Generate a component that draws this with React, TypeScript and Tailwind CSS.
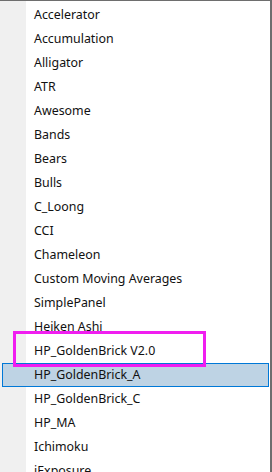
import React from 'react';

const items = [
  'Accelerator',
  'Accumulation',
  'Alligator',
  'ATR',
  'Awesome',
  'Bands',
  'Bears',
  'Bulls',
  'C_Loong',
  'CCI',
  'Chameleon',
  'Custom Moving Averages',
  'SimplePanel',
  'Heiken Ashi',
  'HP_GoldenBrick V2.0',
  'HP_GoldenBrick_A',
  'HP_GoldenBrick_C',
  'HP_MA',
  'Ichimoku',
  'iExposure',
];

export default function App() {
  const selected = 'HP_GoldenBrick_A';

  return (
    <div className="relative w-[272px] h-[472px] overflow-hidden bg-white font-['Noto_Sans','Liberation_Sans',sans-serif] text-[12.4px] text-[#111]">
      <div className="h-full border-t border-t-[#6e6e6e] border-r-2 border-r-[#6e6e6e] bg-[linear-gradient(to_right,#f0f0f0_26px,#ffffff_26px)] pt-[2px] pl-[2px] pr-[1px]">
        {items.map(name => (
          <div
            key={name}
            className={
              name === selected
                ? 'flex items-center h-[24px] pl-[31px] border border-[#0078d7] bg-[#bed3e4]'
                : 'flex items-center h-[24px] pl-[31px] border border-transparent'
            }
          >
            <span className="whitespace-nowrap">{name}</span>
          </div>
        ))}
      </div>

      {/* annotation box */}
      <div className="absolute left-[13px] top-[331px] w-[193px] h-[36px] border-[3px] border-[#f01ef0]" />
    </div>
  );
}
